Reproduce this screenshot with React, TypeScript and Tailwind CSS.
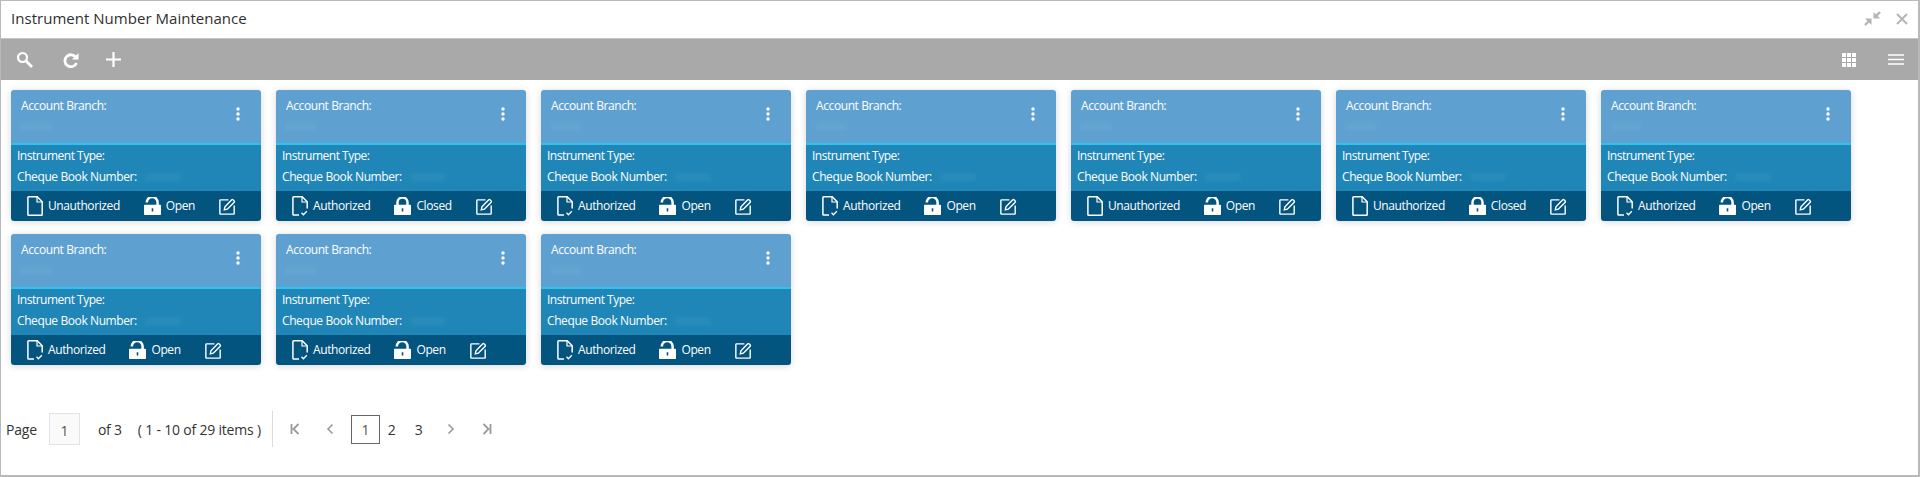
import React from "react";

function DocIcon({ authorized }: { authorized: boolean }) {
  return (
    <svg width="16" height="20" viewBox="0 0 16 20" fill="none" stroke="#fff" strokeWidth="1.500" className="shrink-0">
      {authorized ? (
        <>
          <path d="M7 19H1.700a.8.800 0 0 1-.8-.8V1.600a.8.800 0 0 1 .8-.8h8.500l5 5v6.700" />
          <path d="M10 .8v5.200h5.200" strokeWidth="1.200" />
          <path d="M9.500 16.800l1.900 1.900 3.400-3.500" strokeWidth="1.300" />
        </>
      ) : (
        <>
          <path d="M1.700 19.200a.8.800 0 0 1-.8-.8V1.600a.8.800 0 0 1 .8-.8h8.500l5 5v12.600a.8.800 0 0 1-.8.800z" />
          <path d="M10 .8v5.200h5.200" strokeWidth="1.200" />
        </>
      )}
    </svg>
  );
}

function LockIcon({ closed }: { closed: boolean }) {
  return (
    <svg width="17" height="18" viewBox="0 0 17 18" className="shrink-0">
      {closed ? (
        <path d="M3.500 8V5.500a5 5 0 0 1 10 0V8" fill="none" stroke="#fff" strokeWidth="2.500" />
      ) : (
        <path d="M2.800 5.600V5.400a5.400 5.400 0 0 1 10.800 0v3" fill="none" stroke="#fff" strokeWidth="2.500" />
      )}
      <path
        fillRule="evenodd"
        fill="#fff"
        d="M0 8.500a.8.800 0 0 1 .8-.8h15.400a.8.800 0 0 1 .8.800v8.700a.8.800 0 0 1-.8.800H.8a.8.800 0 0 1-.8-.8zM7.700 11.200v3.400h1.600v-3.400z"
      />
    </svg>
  );
}

function EditIcon() {
  return (
    <svg width="17" height="17" viewBox="0 0 18 18" fill="none" stroke="#fff" strokeWidth="1.500" className="shrink-0">
      <path d="M10 2H1.700a.8.800 0 0 0-.8.800v13.500a.8.800 0 0 0 .8.800h13.600a.8.800 0 0 0 .8-.8V8" />
      <path d="M5.600 12.600l.7-3.300 7.200-7.400a1 1 0 0 1 1.400 0l1.200 1.200a1 1 0 0 1 0 1.400l-7.300 7.300z" />
    </svg>
  );
}

function Card({ status, lock }: { status: string; lock: string }) {
  return (
    <div className="w-[250px] h-[131px] rounded-[3px] overflow-hidden shadow-[0_1px_7px_rgba(0,0,0,0.16)] text-white flex flex-col text-[12px] font-medium leading-[18px]">
      <div className="h-[53px] bg-[#5ea1d0] pl-[10px] pr-[21px] pt-[7px] flex justify-between">
        <div className="flex flex-col">
          <span className="tracking-[-0.4px]">Account Branch:</span>
          <div className="mt-[8px] h-[7px] w-[30px] bg-white/5 blur-[2px]" />
        </div>
        <svg width="4" height="14" viewBox="0 0 4 14" className="mt-[10px] shrink-0" fill="#fff">
          <circle cx="2" cy="2" r="1.700" />
          <circle cx="2" cy="7" r="1.700" />
          <circle cx="2" cy="12" r="1.700" />
        </svg>
      </div>
      <div className="h-[2px] bg-[#2cc3ef]" />
      <div className="h-[46px] bg-[#1f86b7] pl-[6px] pt-[2px] flex flex-col gap-[3px]">
        <span className="tracking-[-0.5px]">Instrument Type:</span>
        <div className="flex items-center">
          <span className="tracking-[-0.4px]">Cheque Book Number:</span>
          <div className="ml-[8px] h-[8px] w-[36px] bg-white/5 blur-[2px]" />
        </div>
      </div>
      <div className="h-[30px] bg-[#03557f] pl-[16px] flex items-center gap-[24px] tracking-[-0.4px]">
        <div className="flex items-center gap-[5px]">
          <DocIcon authorized={status === "Authorized"} />
          <span>{status}</span>
        </div>
        <div className="flex items-center gap-[5px]">
          <LockIcon closed={lock === "Closed"} />
          <span>{lock}</span>
        </div>
        <EditIcon />
      </div>
    </div>
  );
}

const cards = [
  ["Unauthorized", "Open"],
  ["Authorized", "Closed"],
  ["Authorized", "Open"],
  ["Authorized", "Open"],
  ["Unauthorized", "Open"],
  ["Unauthorized", "Closed"],
  ["Authorized", "Open"],
  ["Authorized", "Open"],
  ["Authorized", "Open"],
  ["Authorized", "Open"],
];

export default function App() {
  return (
    <div className="w-[1920px] h-[477px] bg-white border border-[#b9b9b9] border-b-2 border-r-2 flex flex-col overflow-hidden font-['Open_Sans',sans-serif] text-[#333]">
      <div className="h-[37px] shrink-0 flex items-center justify-between pl-[10px] pr-[10px] pb-[2px]">
        <span className="text-[15px] tracking-[0.03px] text-[#2f2f2f]">Instrument Number Maintenance</span>
        <div className="flex items-center gap-[15px]">
          <svg width="17" height="15" viewBox="0 0 17 15" fill="#b5b5b5">
            <path d="M9.500 7.500V1l6.500 6.500z" />
            <path d="M11.500 5.500L16 1" stroke="#b5b5b5" strokeWidth="2.400" />
            <path d="M7.500 7.500V14L1 7.500z" />
            <path d="M5.500 9.500L1 14" stroke="#b5b5b5" strokeWidth="2.400" />
          </svg>
          <svg width="12" height="12" viewBox="0 0 12 12" stroke="#b5b5b5" strokeWidth="2" fill="none">
            <path d="M1 1l10 10M11 1L1 11" />
          </svg>
        </div>
      </div>
      <div className="h-[42px] shrink-0 bg-[#a9a9a9] border-t border-[#c4c4c4] flex items-center justify-between pl-[15px] pr-[14px]">
        <div className="flex items-center">
          <svg width="18" height="18" viewBox="0 0 18 18" fill="none" stroke="#fff" strokeWidth="2.200">
            <circle cx="6.500" cy="6.500" r="4.500" />
            <path d="M10 10l6 6" strokeWidth="2.800" />
          </svg>
          <svg width="16" height="16" viewBox="0 0 16 16" fill="none" stroke="#fff" strokeWidth="2.800" className="ml-[29px]">
            <path d="M13 5.500A6 6 0 1 0 13.500 11" />
            <path d="M15.500 1v6.500H9z" fill="#fff" stroke="none" />
          </svg>
          <svg width="17" height="17" viewBox="0 0 17 17" stroke="#fff" strokeWidth="2.200" className="ml-[26px]">
            <path d="M8.500 1v15M1 8.500h15" />
          </svg>
        </div>
        <div className="flex items-center gap-[32px]">
          <svg width="14" height="14" viewBox="0 0 14 14" fill="#fff">
            <path d="M0 0h4v4H0zM5 0h4v4H5zM10 0h4v4h-4zM0 5h4v4H0zM5 5h4v4H5zM10 5h4v4h-4zM0 10h4v4H0zM5 10h4v4H5zM10 10h4v4h-4z" />
          </svg>
          <svg width="16" height="11" viewBox="0 0 16 11" stroke="#fff" strokeWidth="1.300">
            <path d="M0 1h16M0 5.500h16M0 10h16" />
          </svg>
        </div>
      </div>
      <div className="flex flex-wrap gap-x-[15px] gap-y-[13px] pl-[10px] pt-[10px]">
        {cards.map(([s, l], i) => (
          <Card key={i} status={s} lock={l} />
        ))}
      </div>
      <div className="flex items-center mt-[46px] pl-[5px] text-[14px] tracking-[-0.2px] text-[#333] h-[36px]">
        <span>Page</span>
        <span className="w-[31px] h-[32px] ml-[12px] border border-[#e3e3e3] bg-[#fafafa] flex items-center justify-center text-[#555] pt-[3px]">1</span>
        <span className="ml-[18px]">of 3</span>
        <span className="ml-[16px]">( 1 - 10 of 29 items )</span>
        <span className="w-px h-[36px] bg-[#dcdcdc] ml-[11px]" />
        <svg width="10" height="12" viewBox="0 0 10 12" fill="none" stroke="#9a9a9a" strokeWidth="1.800" className="ml-[17px]">
          <path d="M1.500 1v10M8.500 1L3.500 6l5 5" />
        </svg>
        <svg width="8" height="12" viewBox="0 0 8 12" fill="none" stroke="#9a9a9a" strokeWidth="1.600" className="ml-[26px]">
          <path d="M6.500 1.500L2 6l4.500 4.500" />
        </svg>
        <span className="w-[29px] h-[29px] ml-[17px] border border-[#666] flex items-center justify-center text-[#555]">1</span>
        <span className="ml-[8px]">2</span>
        <span className="ml-[19px]">3</span>
        <svg width="8" height="12" viewBox="0 0 8 12" fill="none" stroke="#9a9a9a" strokeWidth="1.600" className="ml-[25px]">
          <path d="M1.500 1.500L6 6l-4.500 4.500" />
        </svg>
        <svg width="10" height="12" viewBox="0 0 10 12" fill="none" stroke="#9a9a9a" strokeWidth="1.800" className="ml-[27px]">
          <path d="M8.500 1v10M1.500 1l5 5-5 5" />
        </svg>
      </div>
    </div>
  );
}
